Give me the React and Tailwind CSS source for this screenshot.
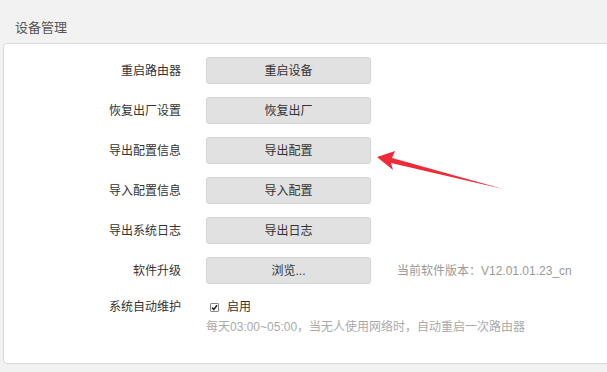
export default function App() {
  const rows = [
    ["重启路由器", "重启设备"],
    ["恢复出厂设置", "恢复出厂"],
    ["导出配置信息", "导出配置"],
    ["导入配置信息", "导入配置"],
    ["导出系统日志", "导出日志"],
  ];
  return (
    <div
      className="relative w-[607px] h-[372px] overflow-hidden bg-[#f2f2f2] text-[12px] text-[#333]"
      style={{ fontFamily: '"Liberation Sans", "Noto Sans CJK SC", sans-serif' }}
    >
      <div className="pl-[15px] pt-[18px] h-[43px] text-[13px] text-[#555]">设备管理</div>
      <div className="ml-[3px] w-[640px] h-[321px] bg-white border border-[#dcdcdc] rounded-[4px] pt-[13px]">
        <div className="flex flex-col gap-[13px]">
          {rows.map(([label, btn]) => (
            <div key={label} className="flex items-center h-[27px]">
              <div className="w-[177px] text-right">{label}</div>
              <button className="ml-[25px] w-[165px] h-[27px] rounded-[3px] bg-[#e1e1e1] border border-[#d4d4d4] text-[#333]">
                {btn}
              </button>
            </div>
          ))}
          <div className="flex items-center h-[27px]">
            <div className="w-[177px] text-right">软件升级</div>
            <button className="ml-[25px] w-[165px] h-[27px] rounded-[3px] bg-[#e1e1e1] border border-[#d4d4d4] text-[#333]">
              浏览...
            </button>
            <div className="ml-[26px] text-[#999]">当前软件版本：V12.01.01.23_cn</div>
          </div>
          <div className="flex">
            <div className="w-[177px] text-right leading-[20px]">系统自动维护</div>
            <div className="ml-[25px]">
              <div className="flex items-center h-[20px] pl-[4px]">
                <span className="w-[9px] h-[9px] border border-[#888] bg-white rounded-[1px] flex items-center justify-center">
                  <svg width="7" height="7" viewBox="0 0 7 7">
                    <path d="M1 3.5 L2.8 5.5 L6 1.2" stroke="#222" strokeWidth="1.5" fill="none" />
                  </svg>
                </span>
                <span className="ml-[8px]">启用</span>
              </div>
              <div className="mt-[1px] text-[#aaa]">每天03:00~05:00，当无人使用网络时，自动重启一次路由器</div>
            </div>
          </div>
        </div>
      </div>
      <svg className="absolute left-0 top-0" width="607" height="372">
        <path d="M377 157 L395 151 L392 158 L503 189 L391 163 L393 170 Z" fill="#ee2b36" />
      </svg>
    </div>
  );
}
